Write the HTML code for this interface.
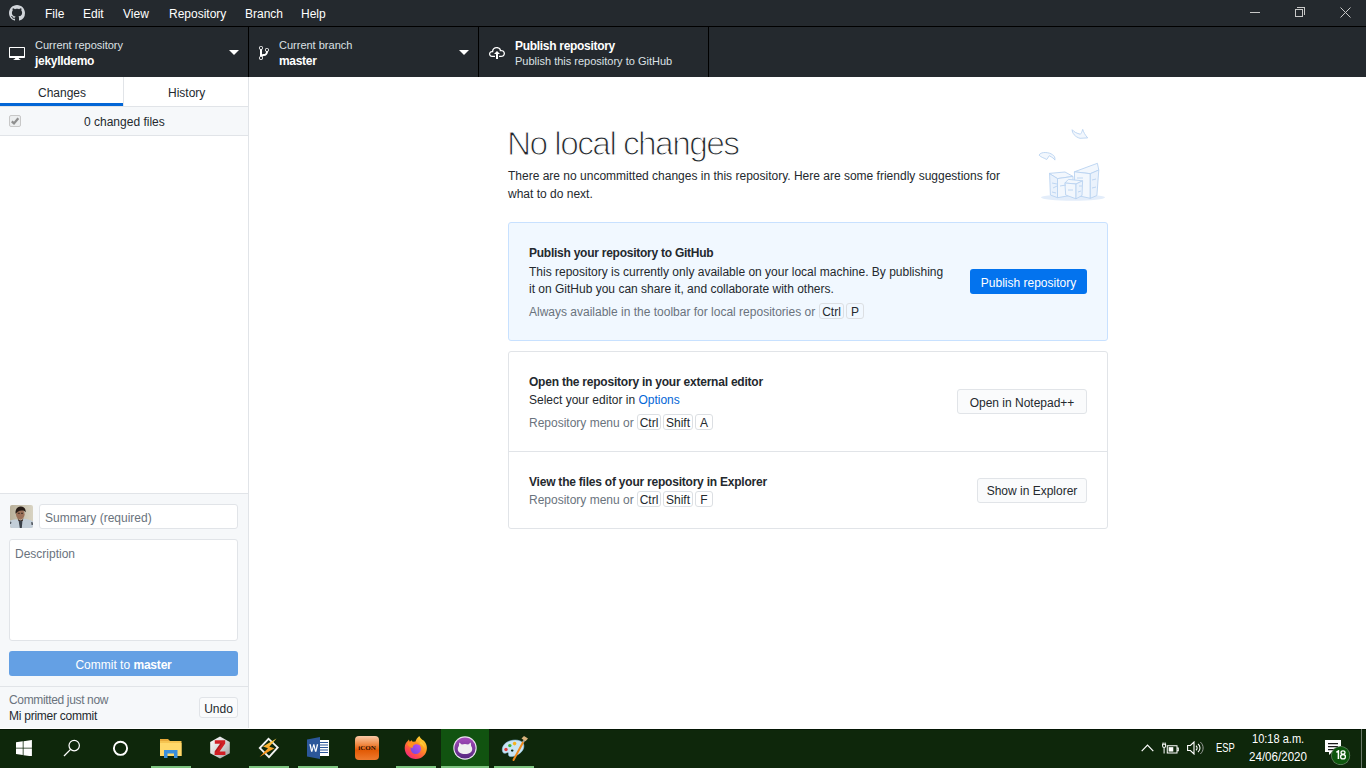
<!DOCTYPE html>
<html><head><meta charset="utf-8">
<style>
*{box-sizing:border-box;margin:0;padding:0}
html,body{width:1366px;height:768px;overflow:hidden;background:#fff;font-family:"Liberation Sans",sans-serif;color:#24292e}
.a{position:absolute;white-space:nowrap}
#title{position:absolute;left:0;top:0;width:1366px;height:26px;background:#24292e}
#tline{position:absolute;left:0;top:26px;width:1366px;height:1px;background:#000}
#toolbar{position:absolute;left:0;top:27px;width:1366px;height:50px;background:#24292e}
.menu{font-size:12px;line-height:12px;color:#fff;top:7.6px}
.sep{position:absolute;top:27px;width:1px;height:50px;background:#000}
.lab{font-size:11px;line-height:11px;color:#dde1e5}
.nm{font-size:12px;line-height:12px;color:#fff;font-weight:bold;letter-spacing:-0.3px}
#sidebar{position:absolute;left:0;top:77px;width:248px;height:651px;background:#fff}
#sbr{position:absolute;left:248px;top:77px;width:1px;height:651px;background:#e1e4e8}
.tab{font-size:12px;line-height:12px;color:#24292e}
#main{position:absolute;left:249px;top:77px;width:1117px;height:651px;background:#fff}
.t12{font-size:12px;line-height:12px}
.card{position:absolute;border:1px solid #e1e4e8;border-radius:3px;background:#fff}
.btn{position:absolute;background:#fafbfc;border:1px solid #e1e4e8;border-radius:3px}
.kbd{position:absolute;background:transparent;border:1px solid #dcdfe3;border-radius:3px;font-size:12px;line-height:12px;color:#24292e}
#taskbar{position:absolute;left:0;top:729px;width:1366px;height:39px;background:#0e270b;border-top:1px solid #051604}
</style></head><body>
<div id="title"></div>
<div id="tline"></div>
<div id="toolbar"></div>
<!-- github logo -->
<svg class="a" style="left:9px;top:5px" width="16" height="16" viewBox="0 0 16 16"><path fill="#d1d5da" d="M8 0C3.58 0 0 3.58 0 8c0 3.54 2.29 6.53 5.47 7.59.4.07.55-.17.55-.38 0-.19-.01-.82-.01-1.49-2.01.37-2.530-.49-2.69-.94-.09-.23-.48-.94-.82-1.13-.28-.15-.68-.52-.01-.53.63-.01 1.08.58 1.23.82.72 1.21 1.87.87 2.33.66.07-.52.28-.87.51-1.07-1.78-.2-3.64-.89-3.64-3.95 0-.87.31-1.59.82-2.15-.08-.2-.36-1.02.08-2.12 0 0 .67-.21 2.2.82.64-.18 1.32-.27 2-.27.68 0 1.36.09 2 .27 1.53-1.04 2.2-.82 2.2-.82.44 1.1.16 1.92.08 2.12.51.56.82 1.27.82 2.15 0 3.07-1.87 3.75-3.65 3.95.29.25.54.73.54 1.48 0 1.07-.01 1.93-.01 2.2 0 .21.15.46.55.38A8.013 8.013 0 0016 8c0-4.42-3.58-8-8-8z"/></svg>
<div class="a menu" style="left:45px">File</div>
<div class="a menu" style="left:83px">Edit</div>
<div class="a menu" style="left:123px">View</div>
<div class="a menu" style="left:169px">Repository</div>
<div class="a menu" style="left:245px">Branch</div>
<div class="a menu" style="left:301px">Help</div>
<!-- window controls -->
<div class="a" style="left:1250px;top:12px;width:10px;height:1px;background:#c8c8c8"></div>
<div class="a" style="left:1295px;top:9px;width:8px;height:8px;border:1px solid #c8c8c8"></div>
<div class="a" style="left:1297px;top:7px;width:8px;height:8px;border-top:1px solid #c8c8c8;border-right:1px solid #c8c8c8"></div>
<svg class="a" style="left:1340px;top:7px" width="11" height="11" viewBox="0 0 11 11"><path d="M0.5 0.5L10.5 10.5M10.5 0.5L0.5 10.5" stroke="#c8c8c8" stroke-width="1"/></svg>

<!-- toolbar sections -->
<div class="sep" style="left:248px"></div>
<div class="sep" style="left:478px"></div>
<div class="sep" style="left:708px"></div>
<!-- monitor icon -->
<svg class="a" style="left:9px;top:45px" width="16" height="16" viewBox="0 0 16 16"><path fill="#fff" d="M15 2H1c-.55 0-1 .45-1 1v9c0 .55.45 1 1 1h5.34c-.25.61-.86 1.39-2.34 2h8c-1.48-.61-2.09-1.39-2.34-2H15c.55 0 1-.45 1-1V3c0-.55-.45-1-1-1zm0 9H1V3h14v8z"/></svg>
<div class="a lab" style="left:35px;top:40.2px">Current repository</div>
<div class="a nm" style="left:35px;top:54.8px">jekylldemo</div>
<svg class="a" style="left:229px;top:50px" width="10" height="5" viewBox="0 0 10 5"><path fill="#fff" d="M0 0h10L5 5z"/></svg>
<!-- branch -->
<svg class="a" style="left:259px;top:45px" width="10" height="16" viewBox="0 0 10 16"><path fill="#fff" d="M10 5c0-1.11-.89-2-2-2a1.993 1.993 0 00-1 3.72v.3c-.02.52-.23.98-.63 1.38-.4.4-.86.61-1.38.63-.83.02-1.48.16-2 .45V4.72a1.993 1.993 0 00-1-3.72C.88 1 0 1.890 0 3a2 2 0 001 1.72v6.56c-.59.35-1 .99-1 1.72 0 1.11.89 2 2 2 1.11 0 2-.89 2-2 0-.53-.2-1-.53-1.36.09-.06.48-.41.59-.47.25-.11.56-.17.94-.17 1.05-.05 1.95-.45 2.75-1.25S8.95 7.770 9 6.73h-.02C9.59 6.37 10 5.73 10 5zM2 1.8c.66 0 1.2.55 1.2 1.2 0 .65-.55 1.2-1.2 1.2C1.35 4.2.8 3.65.8 3c0-.65.55-1.2 1.2-1.2zm0 12.41c-.66 0-1.2-.55-1.2-1.2 0-.65.55-1.2 1.2-1.2.65 0 1.2.55 1.2 1.2 0 .65-.55 1.2-1.2 1.2zm6-8c-.66 0-1.2-.55-1.2-1.2 0-.65.55-1.2 1.2-1.2.65 0 1.2.55 1.2 1.2 0 .65-.55 1.2-1.2 1.2z"/></svg>
<div class="a lab" style="left:279px;top:40.2px">Current branch</div>
<div class="a nm" style="left:279px;top:54.8px">master</div>
<svg class="a" style="left:459px;top:50px" width="10" height="5" viewBox="0 0 10 5"><path fill="#fff" d="M0 0h10L5 5z"/></svg>
<!-- publish -->
<svg class="a" style="left:489px;top:45px" width="16" height="16" viewBox="0 0 16 16"><path fill="#fff" d="M7 9H5l3-3 3 3H9v5H7V9zm5-4c0-.44-.91-3-4.5-3C5.08 2 3 3.92 3 6 1.02 6 0 7.52 0 9c0 1.53 1 3 3 3h3v-1.3H3c-1.62 0-1.7-1.42-1.7-1.7 0-.17.05-1.7 1.7-1.7h1.3V6c0-1.39 1.56-2.7 3.2-2.7 2.55 0 3.13 1.55 3.2 1.8v1.2H12c.81 0 2.7.22 2.7 2.2 0 2.09-2.25 2.2-2.7 2.2h-2V12h2c2.08 0 4-1.16 4-3.5C16 6.060 14.08 5 12 5z"/></svg>
<div class="a nm" style="left:515px;top:39.6px">Publish repository</div>
<div class="a lab" style="left:515px;top:56px">Publish this repository to GitHub</div>

<!-- sidebar -->
<div id="sbr"></div>
<div class="a" style="left:0;top:103px;width:123px;height:3px;background:#0366d6"></div>
<div class="a" style="left:123px;top:77px;width:1px;height:29px;background:#e1e4e8"></div>
<div class="a" style="left:0;top:106px;width:248px;height:1px;background:#e1e4e8"></div>
<div class="a tab" style="left:38px;top:86.6px">Changes</div>
<div class="a tab" style="left:168px;top:86.6px">History</div>
<div class="a" style="left:0;top:107px;width:248px;height:28px;background:#f6f8fa"></div>
<div class="a" style="left:0;top:135px;width:248px;height:1px;background:#e1e4e8"></div>
<div class="a" style="left:9px;top:115px;width:12px;height:12px;border:1px solid #c8c8c8;border-radius:2px;background:#eceeef"></div>
<svg class="a" style="left:10px;top:116px" width="10" height="10" viewBox="0 0 10 10"><path d="M1.8 5.3L4 7.4 8.3 2.3" fill="none" stroke="#8f8f8f" stroke-width="2.3"/></svg>
<div class="a t12" style="left:84px;top:115.8px">0 changed files</div>

<!-- commit area -->
<div class="a" style="left:0;top:493px;width:248px;height:1px;background:#e1e4e8"></div>
<div class="a" style="left:0;top:494px;width:248px;height:234px;background:#f6f8fa"></div>
<svg class="a" style="left:10px;top:505px" width="23" height="23" viewBox="0 0 23 23"><defs><clipPath id="av"><rect width="23" height="23" rx="2"/></clipPath><linearGradient id="avb" x1="0" y1="0" x2="1" y2="0"><stop offset="0" stop-color="#b9b09a"/><stop offset="1" stop-color="#d8d3c2"/></linearGradient></defs><g clip-path="url(#av)"><rect width="23" height="23" fill="url(#avb)"/><path fill="#c3ced8" d="M0 15.5c2-.5 4-1 6-1.2l3.5 1.5 4-2c3 .3 6.5 1 9.5 2.5V23H0z"/><path fill="#3a4048" d="M8.5 15l1.3 8h2l.7-8-2 .8z"/><path fill="#2c3138" d="M0 16.5l1.5.5-.5 2H0zM21 17l2 .5V20h-1.5z" opacity="0.7"/><ellipse cx="10.3" cy="9.3" rx="4.3" ry="5.4" fill="#9b7058"/><path fill="#261b16" d="M5.6 8.8C5 4.5 7.3 1.5 10.8 1.6c3.3.1 5.2 2.5 4.8 5.6L14.3 6c-2-.6-4.5-.6-6.6.7z"/><path fill="#3d2c24" d="M7.5 12.5c.8 2 1.8 3 3 3 1.3 0 2.2-1 3-2.8l-.8 3.2H8.5z"/><path fill="#3a2a22" d="M7.8 8.3h2M11 8.3h2" stroke="#2a1e18" stroke-width="0.8"/></g></svg>
<div class="a" style="left:39px;top:504px;width:199px;height:25px;background:#fff;border:1px solid #e1e4e8;border-radius:3px"></div>
<div class="a t12" style="left:45px;top:512px;color:#6a737d">Summary (required)</div>
<div class="a" style="left:9px;top:539px;width:229px;height:102px;background:#fff;border:1px solid #e1e4e8;border-radius:3px"></div>
<div class="a t12" style="left:15px;top:548px;color:#6a737d">Description</div>
<div class="a" style="left:9px;top:651px;width:229px;height:25px;background:#64a0e4;border-radius:3px"></div>
<div class="a t12" style="left:9px;top:659px;width:229px;text-align:center;color:#fff">Commit to <b style="letter-spacing:-0.2px">master</b></div>
<div class="a" style="left:0;top:686px;width:248px;height:1px;background:#e1e4e8"></div>
<div class="a t12" style="left:9px;top:694px;color:#6a737d;letter-spacing:-0.35px">Committed just now</div>
<div class="a t12" style="left:9px;top:709.5px;letter-spacing:-0.25px">Mi primer commit</div>
<div class="btn" style="left:199px;top:697px;width:39px;height:21px"></div>
<div class="a t12" style="left:199px;top:702.5px;width:39px;text-align:center">Undo</div>

<!-- main -->
<div class="a" style="left:507px;top:127px;font-size:33.5px;line-height:33.5px;letter-spacing:-1.6px;color:#24292e;-webkit-text-stroke:1.1px #fff">No local changes</div>
<div class="a t12" style="left:508px;top:170.2px">There are no uncommitted changes in this repository. Here are some friendly suggestions for</div>
<div class="a t12" style="left:508px;top:188px">what to do next.</div>

<!-- illustration -->
<svg class="a" style="left:1030px;top:120px" width="85" height="90" viewBox="0 0 85 90"><g stroke="#b9d3f1" stroke-width="0.9" stroke-linejoin="round" fill="#f2f7fd">
<ellipse cx="43" cy="77.5" rx="32" ry="3.2" fill="#e3edfa" stroke="none"/>
<path d="M44.4 51.8L60 46 67.4 43.3 68.8 50 60.3 53.7z"/>
<path d="M44.4 51.8L60.3 53.7 60.3 78.3 45 75z"/>
<path d="M60.3 53.7L68.8 50 66.9 75.5 60.3 78.3z" fill="#eaf2fc"/>
<path d="M19 53.4L35 52 43 56.4 27.5 58.6z"/>
<path d="M19.6 53.7L27.5 58.6 27.5 77.7 20.4 75z" fill="#eaf2fc"/>
<path d="M27.5 58.6L43 56.4 43 75 27.5 77.7z"/>
<path d="M34.9 63L38.4 59.4 52.6 60.8 46 64z"/>
<path d="M34.9 63L46 64 46 78.8 35.7 75z"/>
<path d="M46 64L52.6 60.8 52 75.5 46 78.8z" fill="#eaf2fc"/>
<path d="M22 63l5 1M30 66l6-1M22 72l4 1M38 70l5 0M48 72l3-1M62 60l4-1M62 68l4-1M47 58l6 0M49 66l3 0M23 68l4-2" fill="none"/>
<path d="M42.2 9.7C42 13 45 17 50 18.3L57.7 17.9C55 15 53.5 12 52.7 9.4 52 12 51 13.5 50.4 14.2 47 13.5 44 12 42.2 9.7z"/>
<path d="M9.1 35.1C10 33 13 32.5 15.2 32.5 18 32.5 21 33.5 22.3 34.6 24 35.5 25.3 37 24.9 40.1 24 38.5 22.5 37.5 19.3 35.7L16.7 39.5C14.5 38 11 37.5 9.1 35.1z"/>
</g></svg>
<!-- card 1 -->
<div class="card" style="left:508px;top:222px;width:600px;height:119px;background:#f1f8ff;border-color:#c8e1ff"></div>
<div class="a t12" style="left:529px;top:247.4px;font-weight:bold;letter-spacing:-0.25px">Publish your repository to GitHub</div>
<div class="a t12" style="left:529px;top:265.7px">This repository is currently only available on your local machine. By publishing</div>
<div class="a t12" style="left:529px;top:283.3px">it on GitHub you can share it, and collaborate with others.</div>
<div class="a t12" style="left:529px;top:306.4px;color:#6a737d">Always available in the toolbar for local repositories or</div>
<div class="kbd" style="left:819px;top:303px;width:25px;height:16px"></div>
<div class="kbd" style="left:846px;top:303px;width:18px;height:16px"></div>
<div class="a t12" style="left:819px;top:306.4px;width:25px;text-align:center">Ctrl</div>
<div class="a t12" style="left:846px;top:306.4px;width:18px;text-align:center">P</div>
<div class="a" style="left:970px;top:269px;width:117px;height:25px;background:#0373ee;border-radius:3px"></div>
<div class="a t12" style="left:970px;top:276.5px;width:117px;text-align:center;color:#fff">Publish repository</div>

<!-- card 2 -->
<div class="card" style="left:508px;top:351px;width:600px;height:178px"></div>
<div class="a" style="left:509px;top:451px;width:598px;height:1px;background:#e1e4e8"></div>
<div class="a t12" style="left:529px;top:376.4px;font-weight:bold;letter-spacing:-0.22px">Open the repository in your external editor</div>
<div class="a t12" style="left:529px;top:394.4px">Select your editor in <span style="color:#0366d6">Options</span></div>
<div class="a t12" style="left:529px;top:417.4px;color:#6a737d">Repository menu or</div>
<div class="kbd" style="left:637px;top:414px;width:24px;height:16px"></div>
<div class="kbd" style="left:663px;top:414px;width:30px;height:16px"></div>
<div class="kbd" style="left:695px;top:414px;width:18px;height:16px"></div>
<div class="a t12" style="left:637px;top:417.4px;width:24px;text-align:center">Ctrl</div>
<div class="a t12" style="left:663px;top:417.4px;width:30px;text-align:center">Shift</div>
<div class="a t12" style="left:695px;top:417.4px;width:18px;text-align:center">A</div>
<div class="btn" style="left:957px;top:389px;width:130px;height:25px"></div>
<div class="a t12" style="left:957px;top:396.6px;width:130px;text-align:center">Open in Notepad++</div>

<div class="a t12" style="left:529px;top:476.4px;font-weight:bold;letter-spacing:-0.22px">View the files of your repository in Explorer</div>
<div class="a t12" style="left:529px;top:494.4px;color:#6a737d">Repository menu or</div>
<div class="kbd" style="left:637px;top:491px;width:24px;height:16px"></div>
<div class="kbd" style="left:663px;top:491px;width:30px;height:16px"></div>
<div class="kbd" style="left:695px;top:491px;width:18px;height:16px"></div>
<div class="a t12" style="left:637px;top:494.4px;width:24px;text-align:center">Ctrl</div>
<div class="a t12" style="left:663px;top:494.4px;width:30px;text-align:center">Shift</div>
<div class="a t12" style="left:695px;top:494.4px;width:18px;text-align:center">F</div>
<div class="btn" style="left:977px;top:478px;width:110px;height:25px"></div>
<div class="a t12" style="left:977px;top:485px;width:110px;text-align:center">Show in Explorer</div>

<!-- taskbar -->
<div id="taskbar"></div>
<div class="a" style="left:441px;top:729px;width:48px;height:39px;background:#115310"></div>
<!-- running indicators -->
<div class="a" style="left:151px;top:766px;width:40px;height:2px;background:#7dc47f"></div>
<div class="a" style="left:249px;top:766px;width:40px;height:2px;background:#7dc47f"></div>
<div class="a" style="left:298px;top:766px;width:40px;height:2px;background:#7dc47f"></div>
<div class="a" style="left:396px;top:766px;width:40px;height:2px;background:#7dc47f"></div>
<div class="a" style="left:441px;top:766px;width:48px;height:2px;background:#7dc47f"></div>
<div class="a" style="left:494px;top:766px;width:40px;height:2px;background:#7dc47f"></div>
<!-- start -->
<svg class="a" style="left:16px;top:740px" width="16.4" height="16.4" viewBox="0 0 17 17" preserveAspectRatio="none"><path fill="#fff" d="M0 2.3L7 1.4V8H0zM7.8 1.3L16.5 0V8H7.8zM0 8.8H7V15.5L0 14.6zM7.8 8.8H16.5V17L7.8 15.7z"/></svg>
<!-- search -->
<svg class="a" style="left:62px;top:739px" width="19" height="19" viewBox="0 0 19 19"><circle cx="12.2" cy="6.6" r="5.2" fill="none" stroke="#fff" stroke-width="1.2"/><path d="M8.6 10.4L2 17" stroke="#fff" stroke-width="1.3"/></svg>
<!-- cortana -->
<svg class="a" style="left:112px;top:740px" width="17" height="17" viewBox="0 0 17 17"><circle cx="8.5" cy="8.3" r="6.6" fill="none" stroke="#fff" stroke-width="1.9"/></svg>
<!-- explorer -->
<svg class="a" style="left:160px;top:739px" width="22" height="19" viewBox="0 0 22 19"><path fill="#e8a93a" d="M0 0h8l2 2H0z"/><path fill="#f5c451" d="M0 2h21.5v15H0z"/><path fill="#ffd86a" d="M0 4h21.5v13H0z"/><path fill="#3a8fdc" d="M4 11h13.5v8h-3.5v-4.5H7.5V19H4z"/></svg>
<!-- Z -->
<svg class="a" style="left:209px;top:736px" width="22" height="23" viewBox="0 0 22 23"><defs><linearGradient id="zg" x1="0" y1="0" x2="1" y2="1"><stop offset="0" stop-color="#ffffff"/><stop offset="0.5" stop-color="#d8d8d8"/><stop offset="1" stop-color="#9a9a9a"/></linearGradient></defs><path fill="url(#zg)" d="M11 0.5l9.8 5.6v11.2L11 22.5 1.2 17.3V6.1z"/><path fill="#d11f25" d="M5.8 4.2h10.4v3.3l-5.6 8h5.8v3.6H5.6v-3.3l5.6-8H5.8z"/><path fill="#8d0f12" d="M11.2 7.5l-5.6 8h1.8l5.6-8z" opacity="0.5"/></svg>
<!-- winamp -->
<svg class="a" style="left:258px;top:737px" width="22" height="22" viewBox="0 0 22 22"><path fill="#f4f4f4" d="M10.5 0.5L21 10.5 11 21.5 0.5 11z"/><path fill="#0e270b" d="M10.6 3L18.4 10.6 11 18.8 3.1 11z"/><defs><linearGradient id="wg" x1="0" y1="0" x2="0" y2="1"><stop offset="0" stop-color="#ffd24a"/><stop offset="1" stop-color="#f07d0a"/></linearGradient></defs><path fill="url(#wg)" d="M18.5 1.5L5 9.5l5 1.8L1.5 20 16.5 11.3l-5.2-1.6z"/></svg>
<!-- word -->
<svg class="a" style="left:307px;top:736.5px" width="23" height="22" viewBox="0 0 23 22"><path fill="#fff" d="M9 3h13v16H9z"/><path fill="#2b579a" d="M10 5h11v1h-11zM10 7.5h11v1h-11zM10 10h11v1h-11zM10 12.5h11v1h-11zM10 15h11v1h-11z"/><path fill="#2b579a" d="M0 2.5L13 0v22L0 19.5z"/><path fill="#fff" d="M2.3 7.3h1.5l1.1 5.4 1.3-5.4h1.2l1.3 5.4 1.1-5.4h1.4l-1.8 7.5H8l-1.3-5.2-1.3 5.2H4.1z"/></svg>
<div class="a" style="left:355px;top:736px;width:24px;height:24px;border-radius:4px;background:linear-gradient(180deg,#f9c9a6 0%,#f08a45 35%,#e25a05 60%,#ee7a2e 100%)"></div>
<div class="a" style="left:355px;top:745px;width:24px;text-align:center;font-family:'Liberation Serif',serif;font-size:7px;line-height:7px;font-weight:bold;color:#2a0e00">iCON</div>
<!-- firefox -->
<svg class="a" style="left:404px;top:736px" width="23" height="24" viewBox="0 0 23 24"><defs><linearGradient id="ff" x1="0.9" y1="0" x2="0.2" y2="1"><stop offset="0" stop-color="#ffe83a"/><stop offset="0.4" stop-color="#ff9a20"/><stop offset="0.75" stop-color="#ff4a4a"/><stop offset="1" stop-color="#f0208e"/></linearGradient><linearGradient id="fg" x1="1" y1="0" x2="0" y2="1"><stop offset="0" stop-color="#c44cf0"/><stop offset="1" stop-color="#6a4ae0"/></linearGradient></defs><path fill="url(#ff)" d="M0.7 12C0.7 8.5 2.2 6 4 4.8L4.8 3.6 5.8 5.8 7.7 4.2 8.8 6C9.8 5.8 10.8 5.6 11.5 5.6 12 3.5 13.5 1.5 15.3 0.1 16 2 17.5 3.5 20 4.8 22 7 22.9 9.5 22.9 12A11.1 11.1 0 0 1 0.7 12z"/><circle cx="11.8" cy="12.8" r="5.2" fill="url(#fg)"/><path fill="#ff8f1f" d="M3.2 8.2C5 6.5 8 5.5 11 6c2.5.4 4.2 1.5 4.8 3-1.8-.8-3.5-1-5-.4-1.5.6-2.3 2-2.2 3.6C6.5 11.5 4.5 10 3.2 8.2z"/><path fill="#ffd040" d="M16.5 5C19 7 20.5 9.5 20.8 12.5 19.5 10 18 8.5 16 8z" opacity="0.8"/></svg>
<!-- github desktop -->
<svg class="a" style="left:453px;top:736px" width="24" height="24" viewBox="0 0 24 24"><defs><linearGradient id="gd" x1="0" y1="0" x2="0" y2="1"><stop offset="0" stop-color="#a64cbc"/><stop offset="1" stop-color="#55287f"/></linearGradient></defs><circle cx="12" cy="12" r="11.7" fill="#ece6f0"/><circle cx="12" cy="12" r="10.6" fill="url(#gd)"/><path fill="#f0f0f0" d="M6.2 6.5L8.8 8.6C9.8 8.2 10.8 8 12 8s2.2.2 3.2.6l2.6-2.1.3 3.5c.8.9 1.1 2 1.1 3.2 0 3-3 4.8-7.2 4.8S4.8 16.2 4.8 13.2c0-1.2.3-2.3 1.1-3.2z"/></svg>
<!-- paint -->
<svg class="a" style="left:500px;top:734px" width="28" height="28" viewBox="0 0 28 28"><path fill="#c9e4f4" stroke="#8fc1e2" stroke-width="0.6" d="M3 18.5C1 15 3 9.5 9 7.2 15 5 21.5 6 23.5 10c1.5 4-1.5 9-7.5 11.5-4 1.6-7 1.5-7.5-.5-.2-1.2.5-2-.5-2.5-1-.5-3 2-5 0z"/><circle cx="6" cy="15.5" r="1.7" fill="#e23a3a"/><circle cx="9.8" cy="11.6" r="1.7" fill="#3db43d"/><circle cx="14.6" cy="9.6" r="1.8" fill="#f5b21f"/><ellipse cx="12.2" cy="16.6" rx="1.3" ry="1.1" fill="#0e270b"/><path d="M23.5 7.5L13.5 26" stroke="#f08a1c" stroke-width="2" stroke-linecap="round"/><path d="M23.2 8.2l1.3-2.4" stroke="#9aa4ad" stroke-width="1.6"/><path fill="#d8b27c" d="M21.5 4.5L24 2l4 2.5-2.5 2.8z"/></svg>

<!-- tray -->
<svg class="a" style="left:1141px;top:743px" width="13" height="9" viewBox="0 0 13 9"><path d="M0.7 8.2L6.5 2.2l5.8 6" fill="none" stroke="#fff" stroke-width="1.2"/></svg>
<svg class="a" style="left:1162px;top:741px" width="17" height="13" viewBox="0 0 18 14"><path fill="none" stroke="#fff" stroke-width="1.1" d="M1 1.5v2M3.2 1.5v2M0.5 3.5h3.2v1.8C3.7 6.3 3 7 2.1 7S0.5 6.3.5 5.3zM2.1 7v6.5M5.5 5h10.5v7.8H5.5zM16.2 7.5h1.2v3h-1.2"/><path fill="#fff" d="M7 6.6h5v4.8H7z"/></svg>
<svg class="a" style="left:1187px;top:741px" width="17" height="14" viewBox="0 0 17 14"><path fill="none" stroke="#fff" stroke-width="1.1" d="M0.6 4.5h2.8L7 1v12L3.4 9.5H.6z"/><path fill="none" stroke="#fff" stroke-width="1.1" d="M9 4.8c.8.6 1.1 1.4 1.1 2.2s-.3 1.6-1.1 2.2M11 3c1.3 1 2 2.4 2 4s-.7 3-2 4"/><path fill="none" stroke="#aaa" stroke-width="0.9" d="M13.3 1c1.8 1.6 2.8 3.6 2.8 6s-1 4.4-2.8 6"/></svg>
<div class="a" style="left:1215.5px;top:741.6px;font-size:12px;line-height:12px;color:#fff;transform:scaleX(0.78);transform-origin:0 0">ESP</div>
<div class="a" style="left:1251.5px;top:732.6px;font-size:12px;line-height:12px;color:#fff;transform:scaleX(0.92);transform-origin:0 0">10:18 a.m.</div>
<div class="a" style="left:1249px;top:750.6px;font-size:12px;line-height:12px;color:#fff;transform:scaleX(0.965);transform-origin:0 0">24/06/2020</div>
<svg class="a" style="left:1324px;top:739px" width="27" height="26" viewBox="0 0 27 26"><path fill="#fff" d="M1 1h16v12H8l-3 3v-3H1z"/><path fill="#1b1b1b" d="M4 4h10v1.2H4zM4 7h10v1.2H4zM4 10h7v1.2H4z"/><circle cx="16.6" cy="16.5" r="9.6" fill="#5f7f5f"/><circle cx="16.6" cy="16.5" r="8.8" fill="#0c560c"/></svg>
<svg class="a" style="left:1335px;top:750px" width="12" height="10" viewBox="0 0 12 10"><path d="M1.4 2.3L3.4 0.9V9" fill="none" stroke="#fff" stroke-width="1.5"/><ellipse cx="8" cy="2.6" rx="2" ry="1.8" fill="none" stroke="#fff" stroke-width="1.3"/><ellipse cx="8" cy="6.7" rx="2.4" ry="2.2" fill="none" stroke="#fff" stroke-width="1.3"/></svg>
<div class="a" style="left:1361px;top:729px;width:1px;height:39px;background:#6a786a"></div>
</body></html>
